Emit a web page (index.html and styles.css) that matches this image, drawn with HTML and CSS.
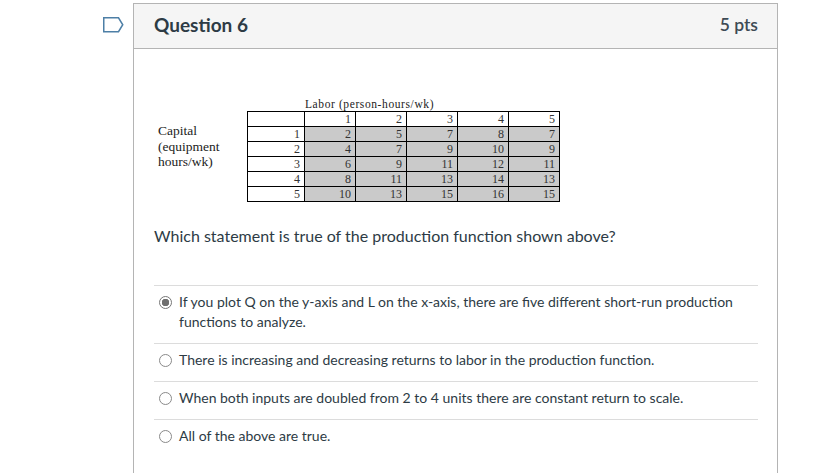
FILE: index.html
```html
<!DOCTYPE html>
<html lang="en">
<head>
    <meta charset="UTF-8">
    <title>Question 6</title>
    <link rel="stylesheet" href="styles.css">
</head>
<body>
    <div class="quiz">
        <div class="marker">
            <svg width="21" height="16" viewBox="0 0 21 16">
                <polygon points="0.75,0.75 15.5,0.75 19.75,7.75 15.5,14.75 0.75,14.75" fill="none" stroke="#4d7fa6" stroke-width="1.5"/>
            </svg>
        </div>
        <div class="question">
            <header class="question-header">
                <h2>Question 6</h2>
                <span class="points">5 pts</span>
            </header>
            <div class="question-body">
                <div class="figure">
                    <div class="capital">Capital<br>(equipment<br>hours/wk)</div>
                    <div class="grid-wrap">
                        <div class="labor">Labor (person-hours/wk)</div>
                        <table class="grid">
                            <tr class="head"><td class="lbl"></td><td>1</td><td>2</td><td>3</td><td>4</td><td>5</td></tr>
                            <tr><td class="lbl">1</td><td>2</td><td>5</td><td>7</td><td>8</td><td>7</td></tr>
                            <tr><td class="lbl">2</td><td>4</td><td>7</td><td>9</td><td>10</td><td>9</td></tr>
                            <tr><td class="lbl">3</td><td>6</td><td>9</td><td>11</td><td>12</td><td>11</td></tr>
                            <tr><td class="lbl">4</td><td>8</td><td>11</td><td>13</td><td>14</td><td>13</td></tr>
                            <tr><td class="lbl">5</td><td>10</td><td>13</td><td>15</td><td>16</td><td>15</td></tr>
                        </table>
                    </div>
                </div>
                <p class="prompt">Which statement is true of the production function shown above?</p>
                <ul class="answers">
                    <li><span class="radio checked"></span><span>If you plot Q on the y-axis and L on the x-axis, there are five different short-run production functions to analyze.</span></li>
                    <li><span class="radio"></span><span>There is increasing and decreasing returns to labor in the production function.</span></li>
                    <li><span class="radio"></span><span>When both inputs are doubled from 2 to 4 units there are constant return to scale.</span></li>
                    <li><span class="radio"></span><span>All of the above are true.</span></li>
                </ul>
            </div>
        </div>
    </div>
</body>
</html>
```

FILE: styles.css
```css
* {
    margin: 0;
    padding: 0;
    box-sizing: border-box;
}
body {
    font-family: Lato, "Open Sans", sans-serif;
    color: #2d3b45;
    background: #fff;
    overflow: hidden;
}
.quiz {
    display: flex;
    padding-top: 3px;
    height: 473px;
}
.marker {
    width: 133px;
    display: flex;
    justify-content: flex-end;
    align-items: flex-start;
    padding: 14px 9px 0 0;
}
.question {
    width: 645px;
    border: 1px solid #b4b4b4;
    border-bottom: none;
}
.question-header {
    height: 45px;
    background: #f5f5f5;
    border-bottom: 1px solid #b4b4b4;
    display: flex;
    justify-content: space-between;
    align-items: center;
    padding: 0 19px 3px 20px;
}
.question-header h2 {
    font-size: 19px;
    font-weight: bold;
}
.points {
    font-size: 17.5px;
    font-weight: 600;
    color: #3d4a54;
}
.question-body {
    padding: 0 19px 0 20px;
}
.figure {
    display: flex;
    padding: 49px 0 0 4px;
    font-family: "Liberation Serif", serif;
    color: #333;
}
.capital {
    width: 89px;
    padding-top: 25px;
    font-size: 13.5px;
    line-height: 15.5px;
    color: #222;
}
.labor {
    padding-left: 58px;
    font-size: 11.5px;
    letter-spacing: 0.6px;
    line-height: 13px;
    color: #222;
}
.grid {
    border-collapse: collapse;
    font-size: 12px;
}
.grid td {
    border: 1px solid #000;
    height: 15px;
    width: 51px;
    padding: 0 4px 0 0;
    text-align: right;
    line-height: 13px;
    background: #cacaca;
}
.grid td.lbl {
    width: 57px;
    background: #fff;
}
.grid tr.head td {
    background: #fff;
}
.prompt {
    margin-top: 24px;
    font-size: 16px;
    line-height: 20px;
}
.answers {
    list-style: none;
    margin-top: 39px;
}
.answers li {
    display: flex;
    align-items: flex-start;
    gap: 7px;
    border-top: 1px solid #dcdcdc;
    padding: 6px 0 11px 5px;
    font-size: 14px;
    line-height: 20px;
}
.radio {
    flex: none;
    width: 13px;
    height: 13px;
    margin-top: 4px;
    border: 1px solid #8a8a8a;
    border-radius: 50%;
    background: #fff;
}
.radio.checked {
    border-color: #777;
    background: radial-gradient(circle, #6f6f6f 0 3.5px, #fff 4px);
}
```
